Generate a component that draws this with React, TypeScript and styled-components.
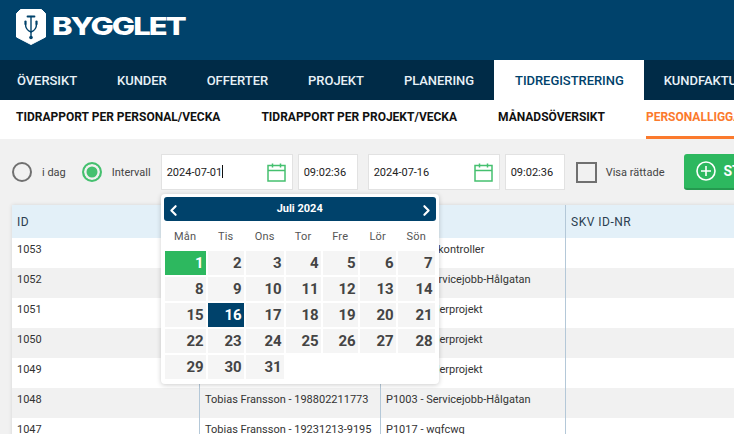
import styled, { createGlobalStyle } from "styled-components";
import { ChevronLeft, ChevronRight } from "lucide-react";

const navItems = ["Översikt", "Kunder", "Offerter", "Projekt", "Planering", "Tidregistrering", "Kundfakturor"];
const subItems = ["Tidrapport per personal/vecka", "Tidrapport per projekt/vecka", "Månadsöversikt", "Personalliggare"];
const weekdays = ["Mån", "Tis", "Ons", "Tor", "Fre", "Lör", "Sön"];
const days = Array.from({ length: 31 }, (_, i) => i + 1);

const rows = [
  ["1053", "Tobias Fransson - 198802211773", "P10 - Egenkontroller"],
  ["1052", "Tobias Fransson - 198802211773", "P1003 - Servicejobb-Hålgatan"],
  ["1051", "Tobias Fransson - 198802211773", "P100 - Underprojekt"],
  ["1050", "Tobias Fransson - 198802211773", "P100 - Underprojekt"],
  ["1049", "Tobias Fransson - 198802211773", "P100 - Underprojekt"],
  ["1048", "Tobias Fransson - 198802211773", "P1003 - Servicejobb-Hålgatan"],
  ["1047", "Tobias Fransson - 19231213-9195", "P1017 - wqfcwq"],
];

function App() {
  return (
    <>
      <GlobalStyle />
      <Page>
        <Header>
          <ShieldLogo />
          <Wordmark>BYGGLET</Wordmark>
        </Header>

        <MainNav>
          {navItems.map((item) => (
            <NavItem key={item} $active={item === "Tidregistrering"}>
              {item}
            </NavItem>
          ))}
        </MainNav>

        <SubNav>
          {subItems.map((item) => (
            <SubItem key={item} $active={item === "Personalliggare"}>
              {item}
            </SubItem>
          ))}
        </SubNav>

        <Toolbar>
          <RadioGroup>
            <Radio />
            <OptionLabel>i dag</OptionLabel>
          </RadioGroup>
          <RadioGroup>
            <Radio $checked />
            <OptionLabel>Intervall</OptionLabel>
          </RadioGroup>

          <DateWrap>
            <DateField>
              <span>
                2024-07-01
                <Caret />
              </span>
              <CalendarIcon />
            </DateField>
            <Calendar>
              <CalendarHead>
                <ChevronLeft size={17} strokeWidth={3} />
                <MonthTitle>Juli 2024</MonthTitle>
                <ChevronRight size={17} strokeWidth={3} />
              </CalendarHead>
              <WeekRow>
                {weekdays.map((day) => (
                  <WeekDay key={day}>{day}</WeekDay>
                ))}
              </WeekRow>
              <DayGrid>
                {days.map((day) => (
                  <DayCell key={day} $variant={day === 1 ? "start" : day === 16 ? "end" : "normal"}>
                    {day}
                  </DayCell>
                ))}
              </DayGrid>
            </Calendar>
          </DateWrap>
          <TimeField>09:02:36</TimeField>

          <DateField $second>
            <span>2024-07-16</span>
            <CalendarIcon />
          </DateField>
          <TimeField>09:02:36</TimeField>

          <CheckGroup>
            <CheckBox />
            <OptionLabel>Visa rättade</OptionLabel>
          </CheckGroup>

          <StartButton>
            <PlusIcon />
            STARTA
          </StartButton>
        </Toolbar>

        <TableWrap>
          <HeadRow>
            <HeadCell>ID</HeadCell>
            <HeadCell>Personal</HeadCell>
            <HeadCell>Projekt</HeadCell>
            <HeadCell>SKV ID-NR</HeadCell>
          </HeadRow>
          {rows.map((row) => (
            <BodyRow key={row[0]}>
              {row.map((cell) => (
                <BodyCell key={cell}>{cell}</BodyCell>
              ))}
              <BodyCell />
            </BodyRow>
          ))}
        </TableWrap>
      </Page>
    </>
  );
}

export default App;

function ShieldLogo() {
  return (
    <svg width="30" height="36" viewBox="0 0 30 36" fill="none" xmlns="http://www.w3.org/2000/svg">
      <path
        d="M4.5 0.5 H25.5 L29.5 4.5 V28 L15 35.5 L0.5 28 V4.5 Z"
        fill="#fff"
        stroke="#fff"
        strokeLinejoin="round"
      />
      <g stroke="#00426b" strokeWidth="1.4" strokeLinecap="round" fill="none">
        <path d="M15 7.5 V28" />
        <path d="M11.5 7.5 H18.5" strokeWidth="1.8" />
        <path d="M9.5 15 Q9.5 21 15 23 Q20.5 21 20.5 15" />
      </g>
      <circle cx="15" cy="28.5" r="1.8" fill="#00426b" />
      <rect x="8.4" y="11.5" width="2.2" height="4.5" rx="1.1" fill="#00426b" />
      <rect x="19.4" y="11.5" width="2.2" height="4.5" rx="1.1" fill="#00426b" />
    </svg>
  );
}

function CalendarIcon() {
  return (
    <IconSlot>
      <svg width="19" height="19" viewBox="0 0 19 19" fill="none" xmlns="http://www.w3.org/2000/svg">
        <rect x="1" y="2.5" width="17" height="15.5" stroke="#45c06f" strokeWidth="1.5" />
        <path d="M1 7.5 H18" stroke="#45c06f" strokeWidth="1.5" />
        <path d="M5.5 0.5 V4.5 M13.5 0.5 V4.5" stroke="#45c06f" strokeWidth="1.5" />
      </svg>
    </IconSlot>
  );
}

function PlusIcon() {
  return (
    <svg width="20" height="20" viewBox="0 0 20 20" fill="none" xmlns="http://www.w3.org/2000/svg">
      <circle cx="10" cy="10" r="9" stroke="#fff" strokeWidth="1.6" />
      <path d="M10 5 V15 M5 10 H15" stroke="#fff" strokeWidth="1.6" />
    </svg>
  );
}

const GlobalStyle = createGlobalStyle`
  html, body {
    margin: 0;
    padding: 0;
    overflow: hidden;
    background: #f1f1f1;
  }
  * {
    box-sizing: border-box;
  }
`;

const Page = styled.div`
  width: 734px;
  height: 434px;
  overflow: hidden;
  font-family: Roboto, sans-serif;
  background: #f1f1f1;
`;

const Header = styled.header`
  height: 60px;
  background: #00426b;
  display: flex;
  align-items: center;
  padding: 0 0 0 16px;
  gap: 6px;

  svg {
    margin-top: -7px;
  }
`;

const Wordmark = styled.div`
  font-family: Inter, sans-serif;
  font-size: 25px;
  font-weight: 800;
  line-height: 1;
  letter-spacing: -1.6px;
  color: #fff;
  margin-top: -7px;
  transform: scaleX(1.24);
  transform-origin: left center;
`;

const MainNav = styled.nav`
  height: 40px;
  background: #002b47;
  display: flex;
  white-space: nowrap;
`;

const NavItem = styled.div<{ $active?: boolean }>`
  display: flex;
  align-items: center;
  flex-shrink: 0;
  padding: 0 20px 0 ${({ $active }) => ($active ? "21px" : "20px")};
  font-size: 13px;
  font-weight: 500;
  letter-spacing: -0.05px;
  text-transform: uppercase;
  color: ${({ $active }) => ($active ? "#00426b" : "#e8f1f7")};
  background: ${({ $active }) => ($active ? "#fff" : "transparent")};

  &:first-child {
    padding-left: 17px;
  }
`;

const SubNav = styled.div`
  height: 39px;
  background: #fff;
  display: flex;
  gap: 41px;
  padding-left: 16px;
  white-space: nowrap;
`;

const SubItem = styled.div<{ $active?: boolean }>`
  display: flex;
  align-items: center;
  flex-shrink: 0;
  padding-bottom: 3px;
  font-size: 12px;
  font-weight: 700;
  text-transform: uppercase;
  color: ${({ $active }) => ($active ? "#fb7a2d" : "#111")};
  border-bottom: 3px solid ${({ $active }) => ($active ? "#fb7a2d" : "transparent")};
`;

const Toolbar = styled.div`
  height: 66px;
  padding: 15px 0 0 12px;
  display: flex;
  align-items: flex-start;
  white-space: nowrap;
`;

const RadioGroup = styled.div`
  flex-shrink: 0;
  height: 36px;
  display: flex;
  align-items: center;
  gap: 10px;
  margin-right: 16px;

  & + & {
    margin-right: 10px;
  }
`;

const Radio = styled.div<{ $checked?: boolean }>`
  width: 20px;
  height: 20px;
  border-radius: 50%;
  border: 2px solid ${({ $checked }) => ($checked ? "#45c06f" : "#707070")};
  background: ${({ $checked }) => ($checked ? "#45c06f" : "transparent")};
  box-shadow: ${({ $checked }) => ($checked ? "inset 0 0 0 2.5px #f1f1f1" : "none")};
`;

const OptionLabel = styled.span`
  font-size: 11px;
  color: #444;
`;

const DateWrap = styled.div`
  position: relative;
  flex-shrink: 0;
`;

const DateField = styled.div<{ $second?: boolean }>`
  flex-shrink: 0;
  width: 132px;
  height: 36px;
  margin-left: ${({ $second }) => ($second ? "10px" : "0")};
  padding: 0 6px 0 5px;
  display: flex;
  align-items: center;
  justify-content: space-between;
  background: #fff;
  border: 1px solid #e2e2e2;
  font-size: 11px;
  color: #222;
`;

const Caret = styled.span`
  display: inline-block;
  width: 1px;
  height: 13px;
  vertical-align: -2px;
  background: #111;
`;

const IconSlot = styled.span`
  display: flex;
`;

const TimeField = styled.div`
  flex-shrink: 0;
  width: 60px;
  height: 36px;
  margin-left: 5px;
  padding-left: 5px;
  display: flex;
  align-items: center;
  background: #fff;
  border: 1px solid #e2e2e2;
  font-size: 11px;
  color: #222;
`;

const CheckGroup = styled.div`
  flex-shrink: 0;
  height: 36px;
  margin-left: 11px;
  display: flex;
  align-items: center;
  gap: 9px;
`;

const CheckBox = styled.div`
  width: 21px;
  height: 21px;
  border: 2.5px solid #707070;
`;

const StartButton = styled.div`
  flex-shrink: 0;
  width: 120px;
  height: 36px;
  margin-left: 20px;
  padding-left: 12px;
  display: flex;
  align-items: center;
  gap: 7px;
  background: #2db85f;
  border-bottom: 2px solid #25994f;
  border-radius: 3px;
  font-size: 14px;
  font-weight: 700;
  color: #fff;
`;

const TableWrap = styled.div`
  margin-left: 12px;
  width: 760px;
  box-shadow: 0 0 4px rgba(0, 0, 0, 0.12);
  font-size: 11px;
  color: #333;
`;

const columns = "187px 181px 185px 1fr";

const HeadRow = styled.div`
  height: 33px;
  display: grid;
  grid-template-columns: ${columns};
  background: #e3f0f8;
`;

const HeadCell = styled.div`
  display: flex;
  align-items: center;
  padding-left: 5px;
  font-size: 12px;
  letter-spacing: 0.5px;
  color: #2c3e50;

  & + & {
    border-left: 1px solid #b4c8d8;
  }
`;

const BodyRow = styled.div`
  height: 30px;
  display: grid;
  grid-template-columns: ${columns};
  background: #fff;

  &:nth-child(odd) {
    background: #f1f1f1;
  }
`;

const BodyCell = styled.div`
  padding: 5px 0 0 5px;
  line-height: 13px;
  white-space: nowrap;
  overflow: hidden;

  & + & {
    border-left: 1px solid #b4c8d8;
  }
`;

const Calendar = styled.div`
  position: absolute;
  top: 40px;
  left: 0;
  z-index: 5;
  width: 278px;
  height: 190px;
  padding: 3px;
  background: #fff;
  border-radius: 4px;
  box-shadow: 0 1px 5px rgba(0, 0, 0, 0.2);
`;

const CalendarHead = styled.div`
  height: 24px;
  padding: 0 1px;
  display: flex;
  align-items: center;
  justify-content: space-between;
  background: #00426b;
  border-radius: 3px;
  color: #fff;

  svg {
    margin-top: 2px;
  }
`;

const MonthTitle = styled.span`
  font-size: 11px;
  font-weight: 700;
  margin-top: -2px;
`;

const dayColumns = "41px 36px 38px 35px 35px 36px 37px";

const WeekRow = styled.div`
  height: 30px;
  padding-left: 1px;
  display: grid;
  grid-template-columns: ${dayColumns};
  column-gap: 2px;
  align-items: center;
`;

const WeekDay = styled.div`
  text-align: center;
  font-size: 11px;
  color: #555;
  letter-spacing: 0.2px;
`;

const DayGrid = styled.div`
  padding: 0 0 0 1px;
  display: grid;
  grid-template-columns: ${dayColumns};
  grid-auto-rows: 24px;
  gap: 2px;
`;

const DayCell = styled.div<{ $variant: "normal" | "start" | "end" }>`
  display: flex;
  align-items: center;
  justify-content: flex-end;
  padding-right: 2px;
  font-size: 15px;
  font-weight: 700;
  background: ${({ $variant }) =>
    $variant === "start" ? "#2db85f" : $variant === "end" ? "#00426b" : "#f5f5f5"};
  color: ${({ $variant }) => ($variant === "normal" ? "#444" : "#fff")};
`;
